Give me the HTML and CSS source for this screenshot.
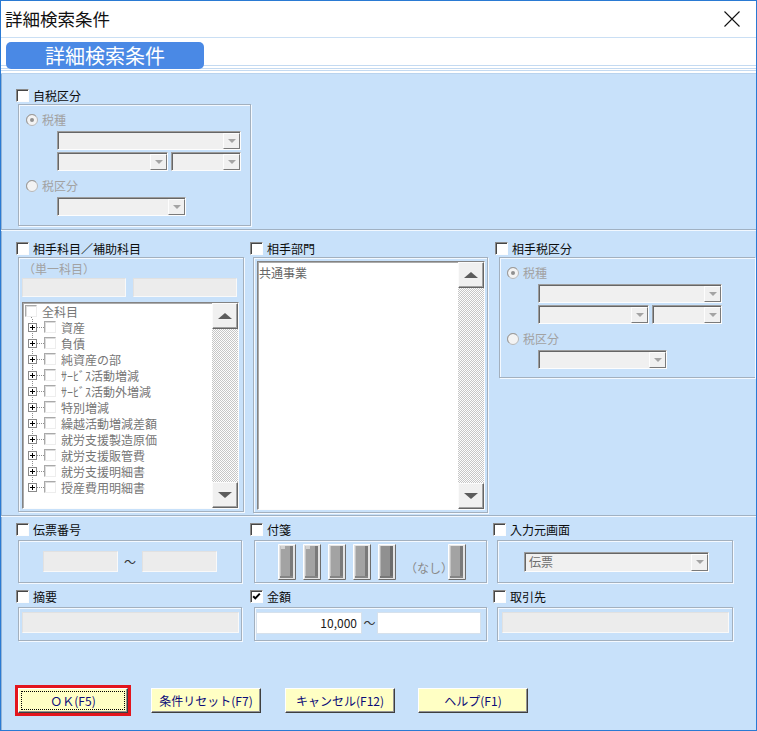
FILE: index.html
```html
<!DOCTYPE html>
<html lang="ja">
<head>
<meta charset="utf-8">
<title>詳細検索条件</title>
<link rel="stylesheet" href="styles.css">
</head>
<body>
<div class="window">
  <div class="titlebar">
    <div class="title">詳細検索条件</div>
    <svg class="close" width="16" height="16" viewBox="0 0 16 16"><path d="M0.5 0.5L15.5 15.5M15.5 0.5L0.5 15.5" stroke="#111" stroke-width="1.1" fill="none"/></svg>
  </div>
  <div class="tabstrip"><div class="tab">詳細検索条件</div></div>
  <div class="content">
    <section class="sec sec1">
      <div class="hdr"><span class="cb"></span><span class="lbl">自税区分</span></div>
      <div class="gbox taxbox tax1">
        <div class="rrow"><svg class="radio" width="12" height="12" viewBox="0 0 12 12"><circle cx="6" cy="6" r="5.5" fill="#f3f3f3" stroke="#b8b8b8"/><path d="M2.1 9.9A5.5 5.5 0 0 1 9.9 2.1" stroke="#9c9c9c" fill="none"/><circle cx="6" cy="6" r="2" fill="#909090"/></svg><span class="dlbl">税種</span></div>
        <div class="combo w184"><span class="dd"></span></div>
        <div class="crow"><div class="combo w111"><span class="dd"></span></div><div class="combo w70"><span class="dd"></span></div></div>
        <div class="rrow"><svg class="radio" width="12" height="12" viewBox="0 0 12 12"><circle cx="6" cy="6" r="5.5" fill="#f3f3f3" stroke="#b8b8b8"/><path d="M2.1 9.9A5.5 5.5 0 0 1 9.9 2.1" stroke="#9c9c9c" fill="none"/></svg><span class="dlbl">税区分</span></div>
        <div class="combo w129"><span class="dd"></span></div>
      </div>
    </section>

    <section class="sec sec2">
      <div class="c2a">
        <div class="hdr"><span class="cb"></span><span class="lbl">相手科目／補助科目</span></div>
        <div class="gbox acct">
          <div class="single">（単一科目）</div>
          <div class="frow"><span class="gfield"></span><span class="gfield"></span></div>
          <div class="sunken tree">
            <div class="tbody">
              <div class="trow root"><span class="tcb"></span><span class="tt">全科目</span></div>
              <div class="trow child"><span class="pbox"></span><span class="hd"></span><span class="tcb"></span><span class="tt">資産</span></div>
              <div class="trow child"><span class="pbox"></span><span class="hd"></span><span class="tcb"></span><span class="tt">負債</span></div>
              <div class="trow child"><span class="pbox"></span><span class="hd"></span><span class="tcb"></span><span class="tt">純資産の部</span></div>
              <div class="trow child"><span class="pbox"></span><span class="hd"></span><span class="tcb"></span><span class="tt">ｻｰﾋﾞｽ活動増減</span></div>
              <div class="trow child"><span class="pbox"></span><span class="hd"></span><span class="tcb"></span><span class="tt">ｻｰﾋﾞｽ活動外増減</span></div>
              <div class="trow child"><span class="pbox"></span><span class="hd"></span><span class="tcb"></span><span class="tt">特別増減</span></div>
              <div class="trow child"><span class="pbox"></span><span class="hd"></span><span class="tcb"></span><span class="tt">繰越活動増減差額</span></div>
              <div class="trow child"><span class="pbox"></span><span class="hd"></span><span class="tcb"></span><span class="tt">就労支援製造原価</span></div>
              <div class="trow child"><span class="pbox"></span><span class="hd"></span><span class="tcb"></span><span class="tt">就労支援販管費</span></div>
              <div class="trow child"><span class="pbox"></span><span class="hd"></span><span class="tcb"></span><span class="tt">就労支援明細書</span></div>
              <div class="trow child last"><span class="pbox"></span><span class="hd"></span><span class="tcb"></span><span class="tt">授産費用明細書</span></div>
            </div>
            <div class="vscroll"><span class="sbtn"><i class="tri-up"></i></span><span class="track"></span><span class="sbtn"><i class="tri-down"></i></span></div>
          </div>
        </div>
      </div>
      <div class="c2b">
        <div class="hdr"><span class="cb"></span><span class="lbl">相手部門</span></div>
        <div class="gbox dept">
          <div class="sunken list">
            <div class="lbody">共通事業</div>
            <div class="vscroll"><span class="sbtn"><i class="tri-up"></i></span><span class="track"></span><span class="sbtn"><i class="tri-down"></i></span></div>
          </div>
        </div>
      </div>
      <div class="c2c">
        <div class="hdr"><span class="cb"></span><span class="lbl">相手税区分</span></div>
        <div class="gbox taxbox tax3">
          <div class="rrow"><svg class="radio" width="12" height="12" viewBox="0 0 12 12"><circle cx="6" cy="6" r="5.5" fill="#f3f3f3" stroke="#b8b8b8"/><path d="M2.1 9.9A5.5 5.5 0 0 1 9.9 2.1" stroke="#9c9c9c" fill="none"/><circle cx="6" cy="6" r="2" fill="#909090"/></svg><span class="dlbl">税種</span></div>
          <div class="combo w184"><span class="dd"></span></div>
          <div class="crow"><div class="combo w111"><span class="dd"></span></div><div class="combo w70"><span class="dd"></span></div></div>
          <div class="rrow"><svg class="radio" width="12" height="12" viewBox="0 0 12 12"><circle cx="6" cy="6" r="5.5" fill="#f3f3f3" stroke="#b8b8b8"/><path d="M2.1 9.9A5.5 5.5 0 0 1 9.9 2.1" stroke="#9c9c9c" fill="none"/></svg><span class="dlbl">税区分</span></div>
          <div class="combo w129"><span class="dd"></span></div>
        </div>
      </div>
    </section>

    <section class="sec sec3">
      <div class="row3 r1">
        <div class="c3a">
          <div class="hdr"><span class="cb"></span><span class="lbl">伝票番号</span></div>
          <div class="gbox slip"><span class="gfield"></span><span class="tilde">～</span><span class="gfield"></span></div>
        </div>
        <div class="c3b">
          <div class="hdr"><span class="cb"></span><span class="lbl">付箋</span></div>
          <div class="gbox tags">
            <svg class="tag" width="18" height="36" viewBox="0 0 18 36"><rect width="18" height="36" fill="#e4e4e4"/><path d="M0.5 35.5V0.5H17.5" stroke="#fff" fill="none"/><path d="M17.5 0.5V35.5H0.5" stroke="#6c6c6c" fill="none"/><rect x="2" y="2" width="13" height="32" fill="#a3a3a3"/><rect x="2" y="2" width="1" height="32" fill="#c4c4c4"/><rect x="12" y="2" width="3" height="32" fill="#7a7a7a"/><rect x="2" y="32" width="13" height="2" fill="#858585"/><rect x="3" y="2" width="4" height="3" fill="#d2d2d2"/></svg>
            <svg class="tag" width="18" height="36" viewBox="0 0 18 36"><rect width="18" height="36" fill="#e4e4e4"/><path d="M0.5 35.5V0.5H17.5" stroke="#fff" fill="none"/><path d="M17.5 0.5V35.5H0.5" stroke="#6c6c6c" fill="none"/><rect x="2" y="2" width="13" height="32" fill="#a3a3a3"/><rect x="2" y="2" width="1" height="32" fill="#c4c4c4"/><rect x="12" y="2" width="3" height="32" fill="#7a7a7a"/><rect x="2" y="32" width="13" height="2" fill="#858585"/><rect x="3" y="2" width="4" height="3" fill="#d2d2d2"/></svg>
            <svg class="tag" width="18" height="36" viewBox="0 0 18 36"><rect width="18" height="36" fill="#e4e4e4"/><path d="M0.5 35.5V0.5H17.5" stroke="#fff" fill="none"/><path d="M17.5 0.5V35.5H0.5" stroke="#6c6c6c" fill="none"/><rect x="2" y="2" width="13" height="32" fill="#a3a3a3"/><rect x="2" y="2" width="1" height="32" fill="#c4c4c4"/><rect x="12" y="2" width="3" height="32" fill="#7a7a7a"/><rect x="2" y="32" width="13" height="2" fill="#858585"/></svg>
            <svg class="tag" width="18" height="36" viewBox="0 0 18 36"><rect width="18" height="36" fill="#e4e4e4"/><path d="M0.5 35.5V0.5H17.5" stroke="#fff" fill="none"/><path d="M17.5 0.5V35.5H0.5" stroke="#6c6c6c" fill="none"/><rect x="2" y="2" width="13" height="32" fill="#a3a3a3"/><rect x="2" y="2" width="1" height="32" fill="#c4c4c4"/><rect x="12" y="2" width="3" height="32" fill="#7a7a7a"/><rect x="2" y="32" width="13" height="2" fill="#858585"/></svg>
            <svg class="tag" width="18" height="36" viewBox="0 0 18 36"><rect width="18" height="36" fill="#e4e4e4"/><path d="M0.5 35.5V0.5H17.5" stroke="#fff" fill="none"/><path d="M17.5 0.5V35.5H0.5" stroke="#6c6c6c" fill="none"/><rect x="2" y="2" width="13" height="32" fill="#909090"/><rect x="2" y="2" width="1" height="32" fill="#b4b4b4"/><rect x="12" y="2" width="3" height="32" fill="#6c6c6c"/><rect x="2" y="32" width="13" height="2" fill="#787878"/></svg>
            <span class="nashi">（なし）</span>
            <svg class="tag last" width="18" height="36" viewBox="0 0 18 36"><rect width="18" height="36" fill="#e4e4e4"/><path d="M0.5 35.5V0.5H17.5" stroke="#fff" fill="none"/><path d="M17.5 0.5V35.5H0.5" stroke="#6c6c6c" fill="none"/><rect x="2" y="2" width="13" height="32" fill="#a3a3a3"/><rect x="2" y="2" width="1" height="32" fill="#c4c4c4"/><rect x="12" y="2" width="3" height="32" fill="#7a7a7a"/><rect x="2" y="32" width="13" height="2" fill="#858585"/></svg>
          </div>
        </div>
        <div class="c3c">
          <div class="hdr"><span class="cb"></span><span class="lbl">入力元画面</span></div>
          <div class="gbox src"><div class="combo w185"><span class="ctext">伝票</span><span class="dd"></span></div></div>
        </div>
      </div>
      <div class="row3 r2">
        <div class="c3a">
          <div class="hdr"><span class="cb"></span><span class="lbl">摘要</span></div>
          <div class="gbox memo"><span class="gfield"></span></div>
        </div>
        <div class="c3b">
          <div class="hdr"><span class="cb"><svg width="11" height="11" viewBox="0 0 11 11"><path d="M2.2 5.2L4.3 7.4L8.8 2.6" stroke="#000" stroke-width="2" fill="none"/></svg></span><span class="lbl">金額</span></div>
          <div class="gbox amt"><span class="wfield f1">10,000</span><span class="tilde2">～</span><span class="wfield f2"></span></div>
        </div>
        <div class="c3c">
          <div class="hdr"><span class="cb"></span><span class="lbl">取引先</span></div>
          <div class="gbox cust"><span class="gfield"></span></div>
        </div>
      </div>
      <div class="btnrow">
        <div class="okwrap"><button class="btn ok" type="button">ＯＫ(F5)</button></div>
        <button class="btn b2" type="button">条件リセット(F7)</button>
        <button class="btn b3" type="button">キャンセル(F12)</button>
        <button class="btn b4" type="button">ヘルプ(F1)</button>
      </div>
    </section>
  </div>
</div>
</body>
</html>
```
FILE: styles.css
```css
* { box-sizing: border-box; margin: 0; padding: 0; }
html, body { width: 757px; height: 731px; overflow: hidden; background: #fff; }
body { font-family: "Noto Sans CJK JP", "Noto Sans", sans-serif; font-size: 12px; color: #000; }

.window { width: 757px; height: 731px; border: 1px solid #2a7ad3; display: flex; flex-direction: column; background: #fff; }

.titlebar { height: 36px; flex: none; display: flex; align-items: center; padding-left: 4px; }
.title { flex: 1; font-size: 17.5px; line-height: 36px; color: #111; }
.close { flex: none; margin-right: 16px; }

.tabstrip {
  height: 37px; flex: none; border-top: 1px solid #cadff4; padding: 4px 0 0 5px;
  background:
    linear-gradient(#c4daf1, #c4daf1) 0 27px / 100% 1px no-repeat,
    linear-gradient(#c4daf1, #c4daf1) 0 30px / 100% 1px no-repeat,
    linear-gradient(#c4daf1, #c4daf1) 0 32px / 100% 1px no-repeat,
    linear-gradient(#b9d3ee, #b9d3ee) 0 35px / 100% 1px no-repeat,
    #fff;
}
.tab { width: 198px; height: 27px; border-radius: 5px; background: #4a89e5; color: #fff; font-size: 20px; line-height: 27px; text-align: center; }

.content { flex: 1; background: #c8e1fa; box-shadow: inset 1px 0 #94b4d6; display: flex; flex-direction: column; }
.sec { flex: none; }
.sec1 { height: 155px; padding: 15px 0 0 15px; }
.sec2 { height: 286px; border-top: 1px solid #a1b1c2; box-shadow: inset 0 1px #f2f8ff; padding: 12px 0 0 15px; display: flex; }
.sec3 { flex: 1; border-top: 1px solid #a1b1c2; box-shadow: inset 0 1px #f2f8ff; padding: 7px 0 0 15px; }

.hdr { display: flex; align-items: center; height: 13px; }
.cb { width: 13px; height: 13px; flex: none; background: #fff; border: 1px solid; border-color: #8a8a8a #fdfdfd #fdfdfd #8a8a8a; box-shadow: inset 1px 1px #464646; display: flex; align-items: center; justify-content: center; }
.lbl { margin-left: 4px; line-height: 13px; white-space: nowrap; color: #0c0c0c; }

.gbox { border: 1px solid #a3b0be; box-shadow: inset 1px 1px #f4f9ff, 1px 1px #f4f9ff; }

/* tax boxes */
.tax1 { margin: 2px 0 0 2px; width: 233px; height: 122px; }
.tax3 { margin: 2px 0 0 4px; width: 256px; height: 121px; border-right: none; }
.taxbox .rrow { display: flex; align-items: center; height: 12px; margin: 9px 0 0 7px; }
.radio { flex: none; display: block; }
.dlbl { margin-left: 4px; line-height: 12px; color: #a2a2a2; white-space: nowrap; }
.taxbox > .combo { margin: 5px 0 0 38px; }
.crow { display: flex; gap: 3px; margin: 2px 0 0 38px; }

.combo { display: flex; align-items: stretch; height: 19px; background: #f0f0f0; border: 1px solid; border-color: #9c9c9c #fdfdfd #fdfdfd #9c9c9c; box-shadow: inset 1px 1px #666; padding: 1px 0 0 1px; }
.w184 { width: 184px; }
.w111 { width: 111px; }
.w70 { width: 70px; }
.w129 { width: 129px; }
.w185 { width: 185px; }
.dd { margin-left: auto; width: 17px; flex: none; background: #f0f0f0; border: 1px solid; border-color: #fdfdfd #7a7a7a #7a7a7a #fdfdfd; display: flex; align-items: center; justify-content: center; }
.dd::after { content: ""; width: 0; height: 0; border-left: 4px solid transparent; border-right: 4px solid transparent; border-top: 4px solid #a4a4a4; }
.ctext { flex: 1; padding-left: 3px; line-height: 16px; color: #6e6e6e; }

/* sec2 */
.c2a { width: 234px; flex: none; }
.c2b { width: 245px; flex: none; }
.c2c { flex: 1; min-width: 0; }
.acct { margin: 2px 0 0 2px; width: 226px; height: 255px; }
.single { margin: 4px 0 0 4px; height: 14px; line-height: 14px; color: #a2a2a2; white-space: nowrap; }
.frow { display: flex; gap: 7px; margin: 2px 0 0 3px; }
.gfield { display: block; flex: none; background: #ececec; border: 1px solid; border-color: #e1e1e1 #f9f9f9 #f9f9f9 #e1e1e1; }
.frow .gfield { width: 104px; height: 19px; }

.sunken { display: flex; background: #fff; border: 1px solid; border-color: #838383 #fcfcfc #fcfcfc #838383; box-shadow: inset 1px 1px #ababab; }
.tree { margin: 5px 0 0 3px; width: 217px; height: 207px; }
.tbody { flex: 1; min-width: 0; overflow: hidden; }
.vscroll { width: 26px; flex: none; display: flex; flex-direction: column; }
.sbtn { height: 26px; flex: none; background: #f0f0f0; border: 1px solid; border-color: #fbfbfb #666 #666 #fbfbfb; box-shadow: inset -1px -1px #a2a2a2; display: flex; align-items: center; justify-content: center; }
.tri-up { width: 0; height: 0; border-left: 7px solid transparent; border-right: 7px solid transparent; border-bottom: 6px solid #5c5c5c; }
.tri-down { width: 0; height: 0; border-left: 7px solid transparent; border-right: 7px solid transparent; border-top: 6px solid #5c5c5c; }
.track { flex: 1; background: repeating-conic-gradient(#c6c6c6 0 25%, #fdfdfd 0 50%) 0 0 / 2px 2px; }

.trow { display: flex; align-items: center; height: 16px; color: #767676; white-space: nowrap; }
.trow.root { padding-left: 2px; background: repeating-linear-gradient(#8e8e8e 0 1px, transparent 1px 2px) 8px 14px / 1px 2px no-repeat; }
.trow.child { padding-left: 5px; background: repeating-linear-gradient(#8e8e8e 0 1px, transparent 1px 2px) 9px 0 / 1px 16px no-repeat; }
.trow.child.last { background-size: 1px 8px; }
.pbox { width: 9px; height: 9px; flex: none; border: 1px solid #8a8a8a;
  background: linear-gradient(#000, #000) center / 5px 1px no-repeat, linear-gradient(#000, #000) center / 1px 5px no-repeat, #fff; }
.hd { width: 7px; height: 1px; flex: none; background: repeating-linear-gradient(90deg, #8e8e8e 0 1px, transparent 1px 2px); }
.tcb { width: 12px; height: 12px; flex: none; background: #fff; border: 1px solid; border-color: #a9a9a9 #ededed #ededed #a9a9a9; box-shadow: inset 1px 1px #dcdcdc; }
.tt { margin-left: 5px; }

.dept { margin: 2px 0 0 3px; width: 235px; height: 256px; }
.list { margin: 3px 0 0 3px; width: 228px; height: 249px; }
.lbody { flex: 1; padding: 3px 0 0 1px; color: #666; line-height: 16px; }

/* sec3 */
.row3 { display: flex; }
.c3a { width: 234px; flex: none; }
.c3b { width: 243px; flex: none; }
.c3c { flex: 1; min-width: 0; }
.r1 .gbox { margin-top: 4px; height: 43px; display: flex; align-items: center; }
.r2 { margin-top: 7px; }
.r2 .gbox { margin-top: 4px; height: 34px; display: flex; align-items: flex-start; }
.c3a .gbox { margin-left: 2px; width: 224px; }
.c3b .gbox { margin-left: 4px; width: 233px; }
.c3c .gbox { margin-left: 4px; width: 236px; }

.slip { padding-left: 24px; }
.slip .gfield { width: 75px; height: 21px; }
.tilde { width: 24px; text-align: center; color: #333; line-height: 21px; }

.tags { padding-left: 23px; }
.tag { flex: none; display: block; }
.tag + .tag { margin-left: 7px; }
.nashi { flex: none; width: 48px; margin: 13px -5px 0 9px; color: #8a8a8a; white-space: nowrap; line-height: 14px; }

.src .combo { margin-left: 26px; height: 20px; }

.memo .gfield { margin: 4px 0 0 3px; width: 217px; height: 21px; }
.cust .gfield { margin: 4px 0 0 4px; width: 227px; height: 21px; }
.wfield { display: block; flex: none; margin-top: 4px; height: 22px; background: #fff; border: 1px solid #d6e1ec; color: #1a1a1a; line-height: 20px; text-align: right; padding-right: 4px; }
.f1 { width: 106px; margin-left: 1px; }
.f2 { width: 104px; }
.tilde2 { flex: none; width: 15px; margin-top: 4px; line-height: 22px; text-align: center; color: #333; }

.btnrow { display: flex; align-items: center; margin-top: 44px; }
.okwrap { flex: none; margin-left: -1px; border: 3px solid #e3151d; }
.btn { display: block; flex: none; width: 110px; height: 25px; background: #ffffc4; border: 1px solid; border-color: #fff #3e3e3e #3e3e3e #fff; box-shadow: inset -1px -1px #959595; color: #0b0b78; font-family: "Noto Sans CJK JP", "Noto Sans", sans-serif; font-size: 12px; line-height: 23px; text-align: center; white-space: nowrap; cursor: default; }
.btn.ok { outline: 1px dotted #000; outline-offset: -4px; }
.b2 { margin-left: 20px; }
.b3 { margin-left: 24px; }
.b4 { margin-left: 23px; }
```
